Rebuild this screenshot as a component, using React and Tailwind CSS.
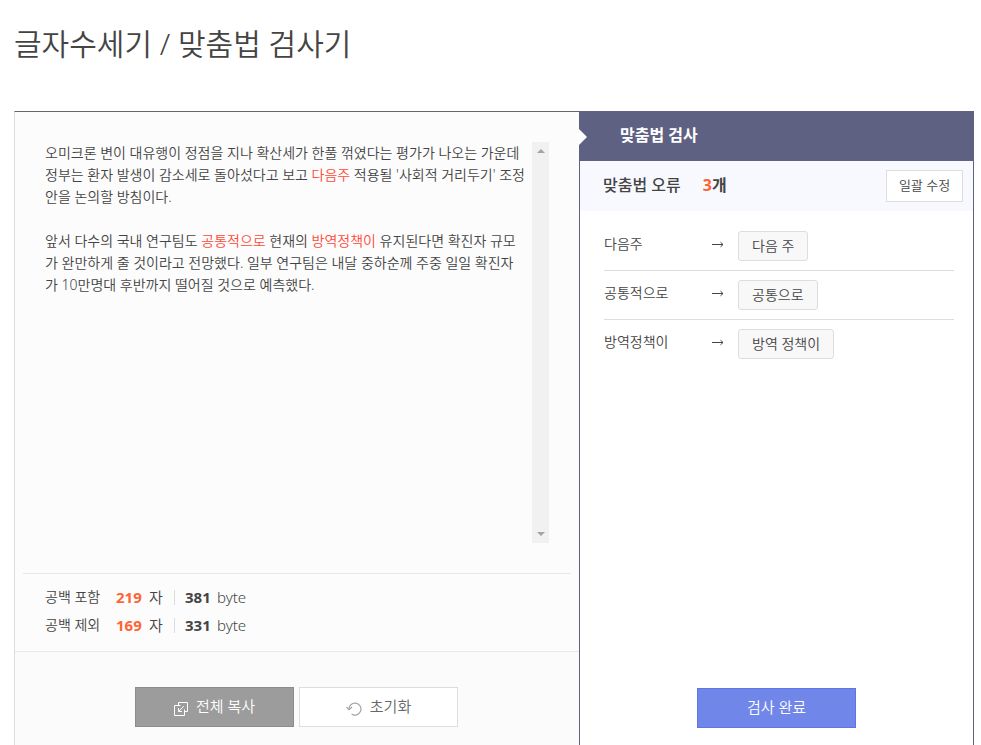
const corrections = [
  { wrong: '다음주', right: '다음 주' },
  { wrong: '공통적으로', right: '공통으로' },
  { wrong: '방역정책이', right: '방역 정책이' },
];

const counts = [
  { label: '공백 포함', chars: 219, bytes: 381 },
  { label: '공백 제외', chars: 169, bytes: 331 },
];

function CopyIcon() {
  return (
    <svg aria-hidden="true" width="14" height="14" viewBox="0 0 14 14" fill="none" stroke="#ffffff" strokeWidth="1" className="mt-[3px]">
      <path d="M4.5 3.5V.5h9v9h-3" />
      <path d="M6.5 3.5h-6v10h10v-6" />
      <path d="M9.8 4.2L5 9M4.5 6v3.5H8" />
    </svg>
  );
}

function ResetIcon() {
  return (
    <svg aria-hidden="true" width="16" height="14" viewBox="0 0 16 14" fill="none" stroke="#a3a3a3" strokeWidth="1.2" className="mt-[3px]">
      <path d="M3 7.2a6 6 0 1 1 2.6 4.8" />
      <path d="M.5 5l2.5 2.6L6 5" />
    </svg>
  );
}

function Wrong({ children }) {
  return <span className="text-[#ff4836]">{children}</span>;
}

function Editor() {
  return (
    <div className="mr-[30px] mt-[30px] flex h-[401px] pl-[30px]">
      <div
        role="textbox"
        aria-multiline="true"
        aria-label="검사할 글"
        contentEditable
        suppressContentEditableWarning
        className="min-w-0 flex-1 overflow-hidden whitespace-nowrap text-sm leading-[22px] outline-none"
      >
        <p>
          오미크론 변이 대유행이 정점을 지나 확산세가 한풀 꺾였다는 평가가 나오는 가운데<br />
          정부는 환자 발생이 감소세로 돌아섰다고 보고 <Wrong>다음주</Wrong> 적용될 '사회적 거리두기' 조정<br />
          안을 논의할 방침이다.
        </p>
        <p className="mt-[22px]">
          앞서 다수의 국내 연구팀도 <Wrong>공통적으로</Wrong> 현재의 <Wrong>방역정책이</Wrong> 유지된다면 확진자 규모<br />
          가 완만하게 줄 것이라고 전망했다. 일부 연구팀은 내달 중하순께 주중 일일 확진자<br />
          가 10만명대 후반까지 떨어질 것으로 예측했다.
        </p>
      </div>
      <div aria-hidden="true" className="flex w-[17px] shrink-0 flex-col items-center justify-between bg-[#f1f1f1] py-[7px]">
        <svg width="8" height="4" viewBox="0 0 8 4" fill="#a3a3a3"><path d="M0 4l4-4 4 4z" /></svg>
        <svg width="8" height="4" viewBox="0 0 8 4" fill="#a3a3a3"><path d="M0 0l4 4 4-4z" /></svg>
      </div>
    </div>
  );
}

export default function App() {
  return (
    <main className="flex min-h-screen flex-col bg-white pl-[14px] pr-[7px] font-['Noto_Sans','Noto_Sans_CJK_KR',sans-serif] font-[350] text-[#444]">
      <h1 className="pt-6 text-[30px] font-[350] leading-10">글자수세기 / 맞춤법 검사기</h1>
      <div className="mt-[47px] flex flex-1">
        <section className="flex min-w-0 flex-1 flex-col border-l border-t border-l-[#ddd] border-t-[#666] bg-[#fcfcfc]">
          <Editor />
          <div className="mx-2 mt-[30px] border-t border-[#e8e8e8] px-[22px] pb-3 pt-[9px]">
            {counts.map((c) => (
              <div key={c.label} className="flex h-7 items-center text-[15px] leading-7">
                <span className="w-[71px] text-sm leading-7">{c.label}</span>
                <strong className="w-[33px] font-bold text-[#ff6434]">{c.chars}</strong>
                <span className="w-[25px]">자</span>
                <span className="mr-[10px] h-[15px] border-l border-[#ddd]" />
                <strong className="w-8 font-bold">{c.bytes}</strong>
                <span>byte</span>
              </div>
            ))}
          </div>
          <div className="flex flex-1 items-start justify-center gap-[5px] border-t border-[#e8e8e8] bg-[#fbfbfb] pb-[18px] pr-px pt-[35px]">
            <button type="button" className="flex h-10 w-[159px] items-center justify-center gap-2 border border-[#8c8c8c] bg-[#9c9c9c] text-[15px] leading-9 text-white">
              <CopyIcon />
              <span className="pb-[2px]">전체 복사</span>
            </button>
            <button type="button" className="flex h-10 w-[159px] items-center justify-center gap-2 border border-[#ddd] bg-white text-[15px] leading-9 text-[#666]">
              <ResetIcon />
              <span className="pb-[2px]">초기화</span>
            </button>
          </div>
        </section>

        <section className="flex w-[395px] shrink-0 flex-col border-x border-[#5e6181] bg-white">
          <header className="relative -mx-px h-[50px] bg-[#5e6181] pl-[41px]">
            <svg aria-hidden="true" width="8" height="16" viewBox="0 0 8 16" fill="#fff" className="absolute left-0 top-[18px]">
              <path d="M0 0l8 8-8 8z" />
            </svg>
            <h2 className="text-base font-bold leading-[48px] text-white">맞춤법 검사</h2>
          </header>
          <div className="flex h-[50px] items-center bg-[#f8f9ff] pl-[23px] pr-[10px]">
            <h3 className="pb-[2px] text-base font-medium leading-[46px]">맞춤법 오류</h3>
            <p className="ml-[22px] pb-[2px] text-base font-bold leading-[46px]">
              <span className="text-[#ff6434]">3</span>개
            </p>
            <button type="button" className="ml-auto h-8 w-[77px] border border-[#ddd] bg-white pb-[2px] text-[13px] leading-7">일괄 수정</button>
          </div>
          <ul className="ml-6 mr-[19px] flex-1 divide-y divide-[#ddd] pt-[11px] text-sm">
            {corrections.map((c) => (
              <li key={c.wrong} className="flex py-[9px]">
                <span className="w-[108px] leading-[26px]">{c.wrong}</span>
                <svg role="img" aria-label="수정" width="12" height="7" viewBox="0 0 12 7" fill="none" stroke="#444" className="mr-[14px] mt-[10px]">
                  <path d="M0 3.5h11M8.5 1.2l2.5 2.3-2.5 2.3" />
                </svg>
                <button type="button" className="h-[30px] rounded-[3px] border border-[#ddd] bg-[#f8f8f8] px-[13px] leading-7">{c.right}</button>
              </li>
            ))}
          </ul>
          <div className="flex justify-center pb-[17px]">
            <button type="button" className="h-10 w-[159px] border border-[#5f75e6] bg-[#7186e9] pb-[2px] text-[15px] leading-9 text-white">검사 완료</button>
          </div>
        </section>
      </div>
    </main>
  );
}
